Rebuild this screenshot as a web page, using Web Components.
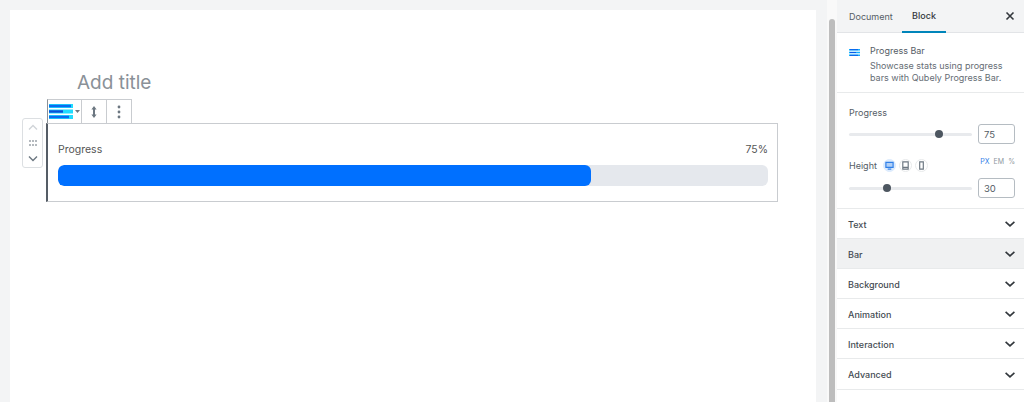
<!DOCTYPE html>
<html lang="en">
<head>
<meta charset="UTF-8">
<title>Progress Bar</title>
<style>
  html, body { margin: 0; height: 100%; overflow: hidden; background: #f3f4f5; }
  body { font-family: Inter, "Liberation Sans", sans-serif; color: #555d66; }
  editor-app { height: 402px; }
</style>
</head>
<body>
<editor-app>
  <editor-canvas slot="main">
    <progress-block label="Progress" value="75"></progress-block>
  </editor-canvas>
  <editor-sidebar slot="side">
    <range-field label="Progress" value="75" thumb="90"></range-field>
    <range-field label="Height" value="30" thumb="38" responsive></range-field>
    <panel-row slot="rows">Text</panel-row>
    <panel-row slot="rows" active>Bar</panel-row>
    <panel-row slot="rows">Background</panel-row>
    <panel-row slot="rows">Animation</panel-row>
    <panel-row slot="rows">Interaction</panel-row>
    <panel-row slot="rows" last>Advanced</panel-row>
  </editor-sidebar>
</editor-app>

<script>
  const chevron = `<svg width="14" height="14" viewBox="0 0 14 14" fill="none" stroke="#32373c" stroke-width="1.6"><path d="M2.6 4.8 7 8.9l4.4-4.1"/></svg>`;

  class EditorApp extends HTMLElement {
    constructor() {
      super();
      this.attachShadow({ mode: 'open' });
      this.shadowRoot.innerHTML = `
        <style>
          :host { display: flex; }
          .main { flex: 1; min-width: 0; display: flex; }
          .side { width: 187px; flex: none; }
          .scroll { width: 10px; margin-left: 11px; flex: none; background: #f9f9f9; padding: 19px 2px 0 2px; box-sizing: border-box; }
          .thumb { height: 100%; background: #bdbdbd; border-radius: 3px 3px 0 0; }
        </style>
        <div class="main"><slot name="main"></slot></div>
        <div class="scroll"><div class="thumb"></div></div>
        <div class="side"><slot name="side"></slot></div>`;
    }
  }

  class EditorCanvas extends HTMLElement {
    constructor() {
      super();
      this.attachShadow({ mode: 'open' });
      this.shadowRoot.innerHTML = `
        <style>
          :host { display: block; flex: 1; margin: 10px 0 0 10px; background: #fff; padding: 60px 38px 0 36px; box-sizing: border-box; }
          h1 { margin: 0 0 0 31px; font: 400 19px/25px Inter, "Liberation Sans", sans-serif; color: #8a9198; height: 53px; }
        </style>
        <h1>Add title</h1>
        <slot></slot>`;
    }
  }

  class ProgressBlock extends HTMLElement {
    constructor() {
      super();
      this.attachShadow({ mode: 'open' });
      const label = this.getAttribute('label');
      const value = this.getAttribute('value');
      this.shadowRoot.innerHTML = `
        <style>
          :host { display: block; position: relative; border: 1px solid #c9ccd0; border-left: 2px solid #555d66; padding: 19px 9px 15px 10px; height: 79px; box-sizing: border-box; }
          .top { display: flex; justify-content: space-between; font-size: 10.5px; line-height: 14px; color: #555; margin-bottom: 8px; }
          .track { height: 21px; background: #e5e8ed; border-radius: 6px; overflow: hidden; }
          .fill { height: 100%; background: #0070ff; border-radius: 6px; }
          .toolbar { position: absolute; left: -1px; top: -25px; display: flex; height: 24px; box-sizing: border-box; border: 1px solid #c9ccd0; border-left-color: #8a9198; border-bottom: 0; background: #fff; }
          .tool { display: flex; align-items: center; justify-content: center; border-left: 1px solid #c9ccd0; width: 24px; }
          .tool:first-child { border-left: 0; width: 33px; justify-content: flex-start; }
          .mover { position: absolute; left: -26px; top: -6px; width: 21px; height: 50px; box-sizing: border-box; border: 1px solid #dcdfe2; border-radius: 3px; background: #fff; display: flex; flex-direction: column; align-items: center; justify-content: space-between; padding: 3px 0; }
        </style>
        <div class="toolbar">
          <div class="tool">
            <svg width="33" height="23" viewBox="0 0 33 23">
              <path d="M1 6h24M1 11.5h24M1 17h24" stroke="#1fdcff" stroke-width="4"/>
              <path d="M1 6h22M1 17h20" stroke="#0a6cf0" stroke-width="2.4"/>
              <path d="M1 11.5h14" stroke="#0a50d8" stroke-width="2.4"/>
              <path d="M27 10h5l-2.5 3z" fill="#6c7781"/>
            </svg>
          </div>
          <div class="tool">
            <svg width="10" height="14" viewBox="0 0 10 14" fill="#6c7781"><path d="M5 1 7.6 4.4H6V9.6h1.6L5 13 2.4 9.6H4V4.4H2.4z"/></svg>
          </div>
          <div class="tool">
            <svg width="4" height="14" viewBox="0 0 4 14" fill="#6c7781"><circle cx="2" cy="2" r="1.4"/><circle cx="2" cy="7" r="1.4"/><circle cx="2" cy="12" r="1.4"/></svg>
          </div>
        </div>
        <div class="mover">
          <svg width="12" height="10" viewBox="0 0 12 10" fill="none" stroke="#d0d4d8" stroke-width="1.4"><path d="M2 7.5 6 3.5l4 4"/></svg>
          <svg width="8" height="6" viewBox="0 0 8 6" fill="#b4b9be"><path d="M0 0h2v2H0zM3 0h2v2H3zM6 0h2v2H6zM0 4h2v2H0zM3 4h2v2H3zM6 4h2v2H6z"/></svg>
          <svg width="12" height="10" viewBox="0 0 12 10" fill="none" stroke="#6c7781" stroke-width="1.4"><path d="M2 2.5l4 4 4-4"/></svg>
        </div>
        <div class="top"><span>${label}</span><span>${value}%</span></div>
        <div class="track"><div class="fill" style="width:${value}%"></div></div>`;
    }
  }

  class EditorSidebar extends HTMLElement {
    constructor() {
      super();
      this.attachShadow({ mode: 'open' });
      this.shadowRoot.innerHTML = `
        <style>
          :host { display: block; background: #fff; height: 402px; font-size: 9px; color: #555d66; }
          .tabs { height: 33px; box-sizing: border-box; background: #f3f4f5; border-bottom: 1px solid #e2e4e7; display: flex; align-items: stretch; position: relative; }
          .tab { width: 65px; padding-left: 12px; box-sizing: border-box; display: flex; align-items: center; }
          .tab.on { width: 44px; padding: 0; justify-content: center; margin-bottom: -1px; border-bottom: 2px solid #0085ba; font-weight: 500; color: #32373c; }
          .close { margin-left: auto; width: 28px; display: flex; align-items: center; justify-content: center; }
          .info { height: 60px; box-sizing: border-box; border-bottom: 1px solid #e8eaeb; display: flex; padding: 12px 12px 0 12px; gap: 10px; }
          .info svg { margin-top: 4px; flex: none; }
          .info b { display: block; font-weight: 400; line-height: 12px; margin-bottom: 3px; }
          .info p { margin: 0; line-height: 12px; color: #666d74; white-space: nowrap; }
          .controls { height: 116px; box-sizing: border-box; border-bottom: 1px solid #e8eaeb; padding-top: 12px; }
        </style>
        <div class="tabs">
          <div class="tab">Document</div>
          <div class="tab on">Block</div>
          <div class="close"><svg width="10" height="10" viewBox="0 0 10 10" stroke="#32373c" stroke-width="1.6"><path d="M1.5 1.5l7 7M8.5 1.5l-7 7"/></svg></div>
        </div>
        <div class="info">
          <svg width="11" height="7" viewBox="0 0 11 7">
            <path d="M0 .7h11M0 3.5h11M0 6.3h11" stroke="#12b0ff" stroke-width="1.4"/>
            <path d="M1 .7h8M1 3.5h6M1 6.3h8" stroke="#0a5be8" stroke-width="1"/>
          </svg>
          <div>
            <b>Progress Bar</b>
            <p>Showcase stats using progress<br>bars with Qubely Progress Bar.</p>
          </div>
        </div>
        <div class="controls"><slot></slot></div>
        <slot name="rows"></slot>`;
    }
  }

  class RangeField extends HTMLElement {
    constructor() {
      super();
      this.attachShadow({ mode: 'open' });
      const responsive = this.hasAttribute('responsive');
      const device = (on, body) => `<span class="dev ${on ? 'on' : ''}"><svg width="9" height="9" viewBox="0 0 10 10" fill="none" stroke="${on ? '#2f7fe8' : '#6c7781'}" stroke-width="1.3">${body}</svg></span>`;
      this.shadowRoot.innerHTML = `
        <style>
          :host { display: block; padding: 0 9px 0 12px; font-size: 9px; }
          :host([responsive]) { padding-top: 1px; }
          :host([responsive]) .row { margin-top: 6px; }
          .head { display: flex; align-items: center; height: 14px; gap: 3px; color: #555d66; }
          .head > span:first-child { margin-right: 3px; }
          .dev { width: 13px; height: 13px; box-sizing: border-box; border-radius: 50%; border: 1px solid #e8eaeb; display: flex; align-items: center; justify-content: center; }
          .dev.on { background: #dcebfd; border-color: #dcebfd; }
          .units { margin-left: auto; display: flex; gap: 4px; font-size: 7px; line-height: 9px; color: #8f98a1; align-self: flex-start; margin-top: -1px; }
          .units .on { color: #2f7fe8; }
          .row { display: flex; align-items: center; gap: 6px; margin-top: 5px; margin-bottom: 13px; }
          .slider { position: relative; flex: 1; height: 3px; background: #e8eaed; border-radius: 2px; }
          .knob { position: absolute; top: -3px; width: 8px; height: 8px; margin-left: -4px; border-radius: 50%; background: #4d5660; }
          input { width: 37px; height: 20px; box-sizing: border-box; border: 1px solid #b5bcc2; border-radius: 3px; padding: 0 0 0 5px; font: 9.5px Inter, "Liberation Sans", sans-serif; color: #555d66; background: #fff; }
        </style>
        <div class="head">
          <span>${this.getAttribute('label')}</span>
          ${responsive ? device(true, '<path d="M1 1.5h8v5.5H1z" fill="#2f7fe8" fill-opacity=".25"/><path d="M3 9h4"/>') + device(false, '<path d="M2 1h6v8H2zM2 7h6"/>') + device(false, '<path d="M3 1h4v8H3z"/>') + '<span class="units"><span class="on">PX</span><span>EM</span><span>%</span></span>' : ''}
        </div>
        <div class="row">
          <div class="slider"><div class="knob" style="left:${this.getAttribute('thumb')}px"></div></div>
          <input value="${this.getAttribute('value')}">
        </div>`;
    }
  }

  class PanelRow extends HTMLElement {
    constructor() {
      super();
      this.attachShadow({ mode: 'open' });
      this.shadowRoot.innerHTML = `
        <style>
          :host { display: flex; align-items: center; justify-content: space-between; height: 30px; box-sizing: border-box; border-bottom: 1px solid #e8eaeb; padding: 1px 7px 0 11px; font-size: 9px; font-weight: 500; color: #444b52; }
          :host([active]) { background: #f0f1f2; }
          :host([last]) { height: 31px; }
        </style>
        <slot></slot>${chevron}`;
    }
  }

  customElements.define('editor-app', EditorApp);
  customElements.define('editor-canvas', EditorCanvas);
  customElements.define('progress-block', ProgressBlock);
  customElements.define('editor-sidebar', EditorSidebar);
  customElements.define('range-field', RangeField);
  customElements.define('panel-row', PanelRow);
</script>
</body>
</html>
